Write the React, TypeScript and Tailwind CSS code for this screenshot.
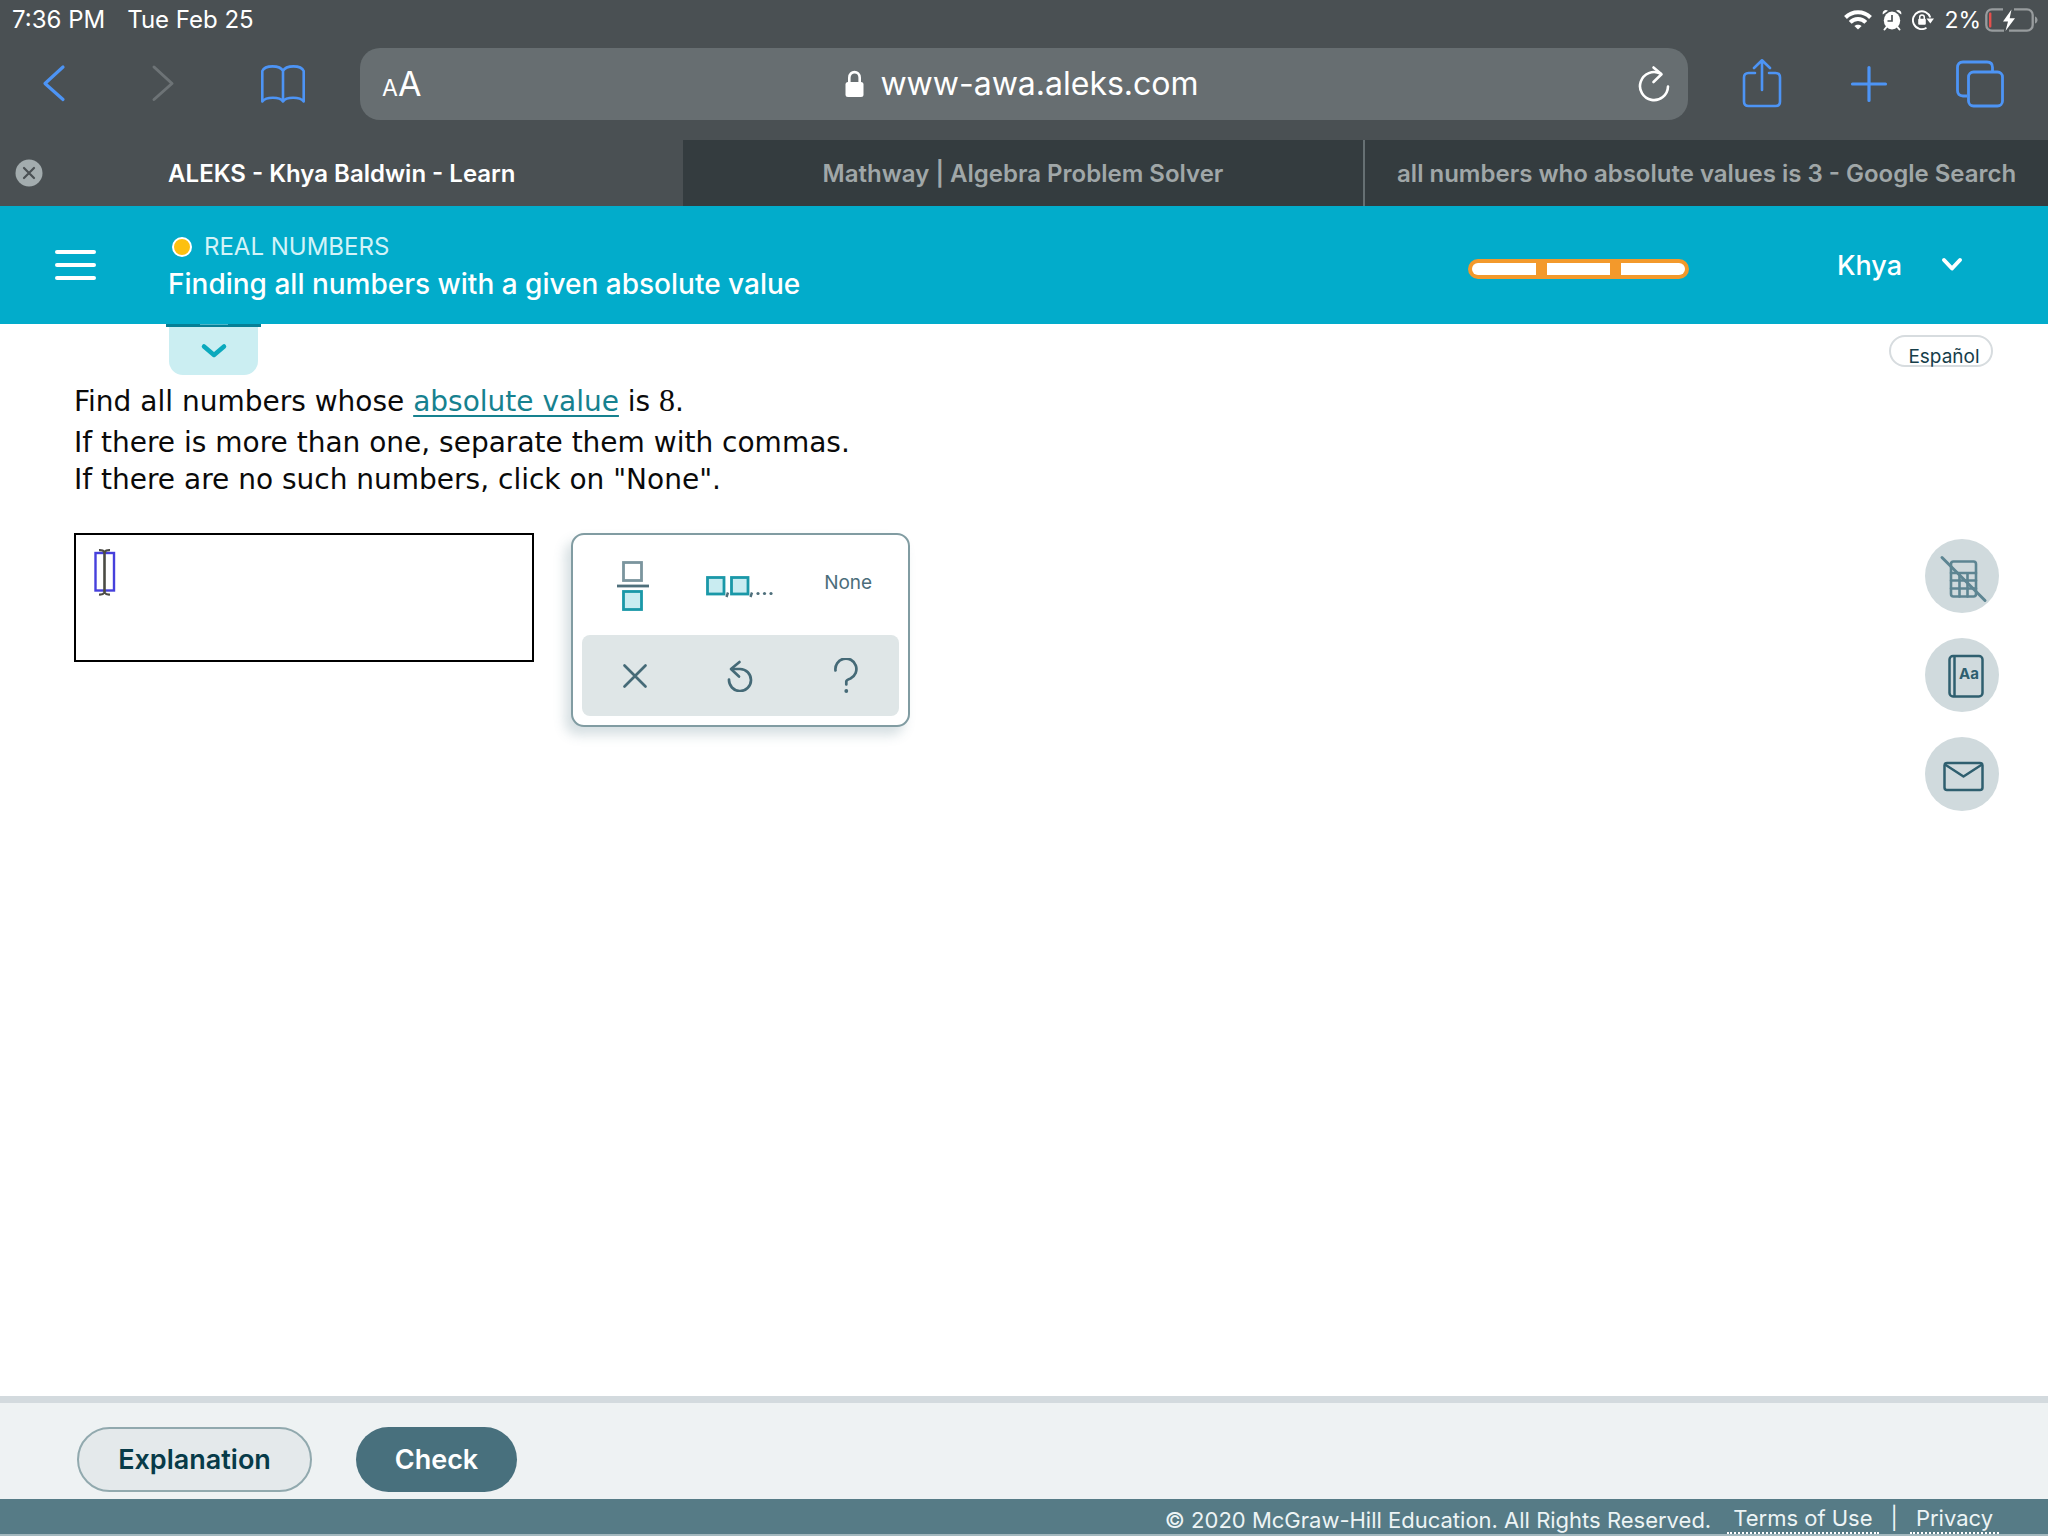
import React from "react";

const HEADING = "font-['Inter',sans-serif]";

function StatusIcons() {
  return (
    <div className="flex items-center text-white">
      <svg className="h-5 w-7" viewBox="0 0 28 20" fill="none" stroke="white" strokeWidth="4">
        <path d="M1.5 7.5C8.5 .5 19.5 .5 26.5 7.5" />
        <path d="M6.2 12.4C10.6 8 17.4 8 21.8 12.4" />
        <path d="M14 19.6 10.4 16C12.4 14.2 15.6 14.2 17.6 16Z" fill="white" stroke="none" />
      </svg>
      <svg className="ml-2.5 h-[22px] w-5" viewBox="0 0 20 22" fill="white">
        <ellipse cx="10" cy="11.5" rx="8.2" ry="9" />
        <path d="M.8 5.600C-.2 1.800 3.500 -.2 6 1.700ZM19.200 5.600C20.200 1.800 16.500 -.2 14 1.700Z" />
        <path d="M4.500 18 2.500 20.500M15.500 18l2 2.500" stroke="white" strokeWidth="2" strokeLinecap="round" />
        <path d="M10 6v6H5.500" fill="none" stroke="#4a5053" strokeWidth="1.700" />
      </svg>
      <svg className="ml-2.5 h-5 w-[22px]" viewBox="0 0 22 20" fill="none" stroke="white" strokeWidth="1.900">
        <path d="M14.500 17.800A8.900 8.900 0 1 1 18.300 7.500" />
        <path d="M14.500 8.500h7.500l-3.700 5Z" fill="white" stroke="none" />
        <rect x="6.200" y="8.700" width="7.600" height="6" rx="1" fill="white" stroke="none" />
        <path d="M7.700 9V7.300a2.300 2.300 0 0 1 4.600 0V9" strokeWidth="1.500" />
      </svg>
      <span className="ml-2.5 text-[23px] leading-7">2%</span>
      <svg className="ml-1 h-6 w-[54px]" viewBox="0 0 54 24" fill="none">
        <path d="M18 1.300H7A5.700 5.700 0 0 0 1.300 7v10A5.700 5.700 0 0 0 7 22.700h12M29 1.300h13A5.700 5.700 0 0 1 47.700 7v10A5.700 5.700 0 0 1 42 22.700H24" stroke="#989c9e" strokeWidth="2.300" />
        <path d="M50 8.500c3.400 1.200 3.400 5.800 0 7Z" fill="#989c9e" />
        <rect x="4" y="4.500" width="2.400" height="15" rx="1" fill="#e5504d" />
        <path d="M26.500 1.500 18 13.500h5L20.500 23 30 10.200h-5.300Z" fill="white" />
      </svg>
    </div>
  );
}

function Toolbar() {
  return (
    <nav className="flex h-[72px] items-center" aria-label="Browser">
      <div className="flex w-[360px] shrink-0 items-center pl-[34px]">
        <button aria-label="Back" className="flex w-10 justify-center">
          <svg className="h-10 w-7" viewBox="0 0 28 40" fill="none" stroke="#4d94f5" strokeWidth="3.200" strokeLinecap="round" strokeLinejoin="round">
            <path d="M23 3 5 19.500 23 35.500" />
          </svg>
        </button>
        <button aria-label="Forward" className="ml-[69px] flex w-10 justify-center">
          <svg className="h-10 w-7" viewBox="0 0 28 40" fill="none" stroke="#6d7376" strokeWidth="3" strokeLinecap="round" strokeLinejoin="round">
            <path d="M5 3 23 19.500 5 35.500" />
          </svg>
        </button>
        <button aria-label="Bookmarks" className="ml-[76px] flex w-12 justify-center">
          <svg className="h-10 w-[46px]" viewBox="0 0 46 40" fill="none" stroke="#4d94f5" strokeWidth="2.600" strokeLinejoin="round">
            <path d="M23 7C20 .8 5 .8 2.300 7V37.500C6 32.500 20 32.500 23 37.500C26 32.500 40 32.500 43.700 37.500V7C41 .8 26 .8 23 7ZM23 7V37" />
          </svg>
        </button>
      </div>
      <div className="flex h-[72px] flex-1 items-center justify-between rounded-[20px] bg-[#676e71] pl-[22px] pr-[18px]">
        <button aria-label="Text size" className="flex w-12 items-baseline pt-[3px] text-white">
          <span className="text-[23px] leading-10">A</span>
          <span className="text-[34px] leading-10">A</span>
        </button>
        <div className="flex items-center gap-4 text-white">
          <svg className="h-7 w-[19px]" viewBox="0 0 19 28" fill="none">
            <path d="M4.300 13V7.800C4.300.2 14.700.2 14.700 7.800V13" stroke="white" strokeWidth="2.600" />
            <rect x=".5" y="12" width="18" height="15" rx="2.500" fill="white" />
          </svg>
          <span className="text-[32px] leading-10">www-awa.aleks.com</span>
        </div>
        <button aria-label="Reload" className="flex w-14 justify-end">
          <svg className="h-10 w-8" viewBox="0 0 32 40" fill="none" stroke="white" strokeWidth="2.600" strokeLinecap="round" strokeLinejoin="round">
            <path d="M30 22.500A14 14 0 1 1 22.500 9.700" />
            <path d="M15.500 3.500 23.500 10.300 15.500 18" />
          </svg>
        </button>
      </div>
      <div className="flex w-[360px] shrink-0 items-center pl-[54px]">
        <button aria-label="Share">
          <svg className="h-[50px] w-10" viewBox="0 0 40 50" fill="none" stroke="#4d94f5" strokeWidth="2.600" strokeLinecap="round" strokeLinejoin="round">
            <path d="M13 14H6.500Q2 14 2 18.500V42.500Q2 47 6.500 47H33.500Q38 47 38 42.500V18.500Q38 14 33.500 14H27" />
            <path d="M20 31V1.500M12 9 20 1.300 28 9" />
          </svg>
        </button>
        <button aria-label="New tab" className="ml-[68px]">
          <svg className="h-[38px] w-[38px]" viewBox="0 0 38 38" stroke="#4d94f5" strokeWidth="3.200" strokeLinecap="round">
            <path d="M19 2.500V35.500M2.500 19H35.500" />
          </svg>
        </button>
        <button aria-label="Show tabs" className="ml-[68px]">
          <svg className="h-12 w-12" viewBox="0 0 48 48" fill="none" stroke="#4d94f5" strokeWidth="2.800">
            <path d="M11 36H7Q1.500 36 1.500 30.500V7.500Q1.500 2 7 2H31Q36.500 2 36.500 7.500V11.500" />
            <rect x="12.500" y="12" width="34" height="34" rx="5" />
          </svg>
        </button>
      </div>
    </nav>
  );
}

function Tabs() {
  return (
    <div className="mt-5 grid h-[66px] grid-cols-3 text-[24px] font-semibold leading-8 text-[#a0a7a8]">
      <div className="flex items-center pl-[15px] pr-[42px] text-white">
        <button aria-label="Close tab">
          <svg className="h-7 w-7" viewBox="0 0 28 28">
            <circle cx="14" cy="14" r="13.500" fill="#a3acae" />
            <path d="M9 9 19 19M19 9 9 19" stroke="#4a5053" strokeWidth="2.200" strokeLinecap="round" />
          </svg>
        </button>
        <a href="#aleks" className="flex-1 truncate pt-0.5 text-center">ALEKS - Khya Baldwin - Learn</a>
      </div>
      <a href="#mathway" className="flex items-center justify-center border-r-2 border-[#667073] bg-[#343c3f] pt-0.5">
        Mathway | Algebra Problem Solver
      </a>
      <a href="#search" className="flex items-center justify-center whitespace-nowrap bg-[#343c3f] pt-0.5">
        all numbers who absolute values is 3 - Google Search
      </a>
    </div>
  );
}

function CourseHeader() {
  return (
    <header className={`flex h-[118px] items-center bg-[#02accb] text-white ${HEADING}`}>
      <button aria-label="Menu" className="ml-[55px] flex w-[41px] flex-col gap-[9px]">
        <span className="h-1 w-full rounded-full bg-white" />
        <span className="h-1 w-full rounded-full bg-white" />
        <span className="h-1 w-full rounded-full bg-white" />
      </button>
      <div className="ml-[72px] pt-[3px]">
        <p className="flex items-center gap-3 pl-1 text-[24px] leading-[34px] text-[#d3f3f8]">
          <span className="size-5 rounded-full border-2 border-white bg-[#fdc010]" />
          REAL NUMBERS
        </p>
        <h1 className="text-[28px] font-medium leading-10">Finding all numbers with a given absolute value</h1>
      </div>
      <div className="ml-auto mt-[7px] grid h-5 w-[221px] grid-cols-3 gap-[11px] rounded-full bg-[#f3992b] p-1">
        <span className="rounded-l-full bg-white" />
        <span className="bg-white" />
        <span className="rounded-r-full bg-white" />
      </div>
      <button className="ml-[148px] mr-[85px] flex items-center gap-[39px] text-[27px] font-medium leading-10">
        <span className="pt-0.5">Khya</span>
        <svg className="h-4 w-[22px]" viewBox="0 0 22 16" fill="none" stroke="white" strokeWidth="4" strokeLinecap="round" strokeLinejoin="round">
          <path d="M3 3 11 11.500 19 3" />
        </svg>
      </button>
    </header>
  );
}

function Keypad() {
  return (
    <div className="h-[194px] w-[339px] rounded-[13px] border-2 border-[#819ca2] bg-white p-[9px] shadow-[-6px_8px_12px_rgba(70,110,125,0.22)]">
      <div className="grid h-[91px] grid-cols-3 items-center pb-2">
        <button aria-label="Fraction" className="flex h-full items-center justify-center pr-1">
          <svg className="h-[52px] w-8" viewBox="0 0 32 52" strokeWidth="2.800">
            <rect x="6.500" y="2.500" width="18" height="18" fill="white" stroke="#7b959e" />
            <path d="M0 26H32" stroke="#4e6f7b" />
            <rect x="6.500" y="31.500" width="18" height="18" fill="#c9ecf1" stroke="#1a98a8" />
          </svg>
        </button>
        <button aria-label="List" className="flex h-full items-center justify-center">
          <svg className="h-7 w-[68px]" viewBox="0 0 68 28" strokeWidth="2.800">
            <rect x="1.500" y="5.500" width="16.500" height="16.500" fill="#c9ecf1" stroke="#1a98a8" />
            <rect x="25.500" y="5.500" width="16.500" height="16.500" fill="#c9ecf1" stroke="#1a98a8" />
            <path d="M22 20.500 20.500 25M46 20.500 44.500 25" stroke="#4e6f7b" strokeWidth="2.400" />
            <g fill="#4e6f7b">
              <circle cx="52" cy="21.500" r="1.600" />
              <circle cx="58.500" cy="21.500" r="1.600" />
              <circle cx="65" cy="21.500" r="1.600" />
            </g>
          </svg>
        </button>
        <button className={`flex h-full items-center justify-center pb-1 pl-1 text-[19px] text-[#4b6d7a] ${HEADING}`}>None</button>
      </div>
      <div className="grid h-[81px] grid-cols-3 items-center rounded-lg bg-[#dfe6e7] text-[#456a77]">
        <button aria-label="Clear" className="flex justify-center">
          <svg className="size-7" viewBox="0 0 28 28" stroke="currentColor" strokeWidth="2.700" strokeLinecap="round">
            <path d="M3.500 3.500 24.500 24.500M24.500 3.500 3.500 24.500" />
          </svg>
        </button>
        <button aria-label="Undo" className="flex justify-center">
          <svg className="h-8 w-7" viewBox="0 0 28 32" fill="none" stroke="currentColor" strokeWidth="2.700" strokeLinecap="round" strokeLinejoin="round">
            <path d="M3 19.500A11 11 0 1 0 14 9H6" />
            <path d="M13.500 2 5 9 13 16.500" />
          </svg>
        </button>
        <button aria-label="Help" className="flex justify-center">
          <svg className="h-9 w-7" viewBox="0 0 28 36" fill="none" stroke="currentColor" strokeWidth="2.700" strokeLinecap="round" strokeLinejoin="round">
            <path d="M3.500 12.500A10.500 10.500 0 1 1 18.500 20.500Q14.300 22 14.300 23.500V26.500" />
            <circle cx="14.300" cy="33" r="1.900" fill="currentColor" stroke="none" />
          </svg>
        </button>
      </div>
    </div>
  );
}

function SideTools() {
  const round = "flex size-[74px] items-center justify-center rounded-full bg-[#d0dadd]";
  return (
    <div className="mt-1 flex flex-col gap-[25px]">
      <button aria-label="Calculator unavailable" className={round}>
        <svg className="size-[74px]" viewBox="0 0 74 74" fill="none" stroke="#5d8592" strokeWidth="2.600" strokeLinecap="round">
          <rect x="26" y="22.500" width="25" height="35" rx="2.500" />
          <path d="M26 34H51M26 41.500H51M26 49.500H51M34.500 34V57.500M42.500 34V57.500" />
          <path d="M17 18.500 60 61.500" strokeWidth="3" />
        </svg>
      </button>
      <button aria-label="Dictionary" className={round}>
        <svg className="size-[74px]" viewBox="0 0 74 74" fill="none" stroke="#2f5f6f" strokeWidth="2.500">
          <rect x="24.500" y="18" width="33" height="40.500" rx="3.500" />
          <path d="M29.500 18V58.500" />
          <text x="34" y="41" fontSize="15" fontWeight="700" fontFamily="Inter, sans-serif" fill="#2f5f6f" stroke="none">Aa</text>
        </svg>
      </button>
      <button aria-label="Message" className={round}>
        <svg className="size-[74px]" viewBox="0 0 74 74" fill="none" stroke="#2f5f6f" strokeWidth="2.500" strokeLinejoin="round">
          <rect x="19.500" y="26" width="38" height="27" rx="2.500" />
          <path d="M20 27.500 38.500 39.500 57 27.500" />
        </svg>
      </button>
    </div>
  );
}

export default function App() {
  return (
    <div className="flex min-h-screen flex-col bg-white font-['Inter',sans-serif]">
      <div className="bg-[#4a5053]">
        <div className="flex h-12 items-center justify-between pb-2 pl-3 pr-[9px] text-[24px] leading-8 text-white">
          <div className="flex gap-[22px]">
            <span>7:36 PM</span>
            <span>Tue Feb 25</span>
          </div>
          <StatusIcons />
        </div>
        <Toolbar />
        <Tabs />
      </div>
      <CourseHeader />

      <main className="flex flex-1 justify-between pl-[74px] pr-[49px]">
        <div>
          <button aria-label="Show topic details" className="ml-[92px] block w-[95px]">
            <span className="flex h-[3px] justify-center bg-[#067f96]">
              <span className="h-px w-7 bg-[#4fb4c6]" />
            </span>
            <span className="mx-auto flex h-12 w-[89px] items-center justify-center rounded-b-[14px] bg-[#cbeef2]">
              <svg className="h-4 w-7" viewBox="0 0 28 16" fill="none" stroke="#0ba9bd" strokeWidth="4.500" strokeLinecap="round" strokeLinejoin="round">
                <path d="M4 3.500 14 12 24 3.500" />
              </svg>
            </span>
          </button>
          <div className="mt-[5px] font-['DejaVu_Sans',sans-serif] text-[28px] leading-[33px] text-[#0a0a0a]">
            <p className="leading-[41px]">
              Find all numbers whose{" "}
              <a href="#absolute-value" className="text-[#16818f] underline decoration-2 underline-offset-4">absolute value</a> is{" "}
              <span className="font-['Liberation_Serif',serif] text-[32px]">8</span>.
            </p>
            <p className="leading-[41px]">If there is more than one, separate them with commas.</p>
            <p>If there are no such numbers, click on "None".</p>
          </div>
          <div className="mt-[37px] flex gap-[37px]">
            <div className="relative">
              <input aria-label="Answer" className="block h-[129px] w-[460px] border-2 border-black bg-white px-5 text-[27px] outline-none" />
              <svg className="absolute left-5 top-4 h-12 w-[22px]" viewBox="0 0 22 48" fill="none">
                <rect x="1.500" y="4" width="18.500" height="37.500" stroke="#4640dc" strokeWidth="2.400" />
                <path d="M10.500 3V43" stroke="#4b4b44" strokeWidth="2.600" />
                <path d="M5 1.200Q9 1 10.500 3Q12 1 16 1.200M5 45.500Q9 45.800 10.500 43.500Q12 45.800 16 45.500" stroke="#4b4b44" strokeWidth="2.200" />
              </svg>
            </div>
            <Keypad />
          </div>
        </div>
        <div className="flex flex-col items-end">
          <button className={`mr-[6px] mt-[11px] h-8 w-[104px] rounded-full border-2 border-[#d7dcdf] pl-1.5 pt-1.5 text-[19px] leading-7 text-[#163e4a] ${HEADING}`}>
            Español
          </button>
          <div className="mt-[168px]">
            <SideTools />
          </div>
        </div>
      </main>

      <div className={`flex h-[103px] items-start gap-11 border-t-[7px] border-[#d3dade] bg-[#eef2f3] pl-[77px] pt-6 text-[27px] font-semibold leading-8 ${HEADING}`}>
        <button className="h-[65px] w-[235px] rounded-full border-2 border-[#91a9ae] bg-[#e4e9eb] text-[#073b49]">Explanation</button>
        <button className="h-[65px] w-[161px] rounded-full bg-[#48707d] text-white">Check</button>
      </div>
      <footer className="flex h-[37px] items-end justify-end border-b-2 border-[#a3b8be] bg-[#567b86] pr-[49px] text-[22px] leading-7 text-[#edf4f5]">
        <span>© 2020 McGraw-Hill Education. All Rights Reserved.</span>
        <a href="#terms" className="ml-4 border-b-2 border-dotted border-white px-1.5">Terms of Use</a>
        <span className="mx-3 pb-0.5">|</span>
        <a href="#privacy" className="border-b-2 border-dotted border-white px-1.5">Privacy</a>
      </footer>
    </div>
  );
}
